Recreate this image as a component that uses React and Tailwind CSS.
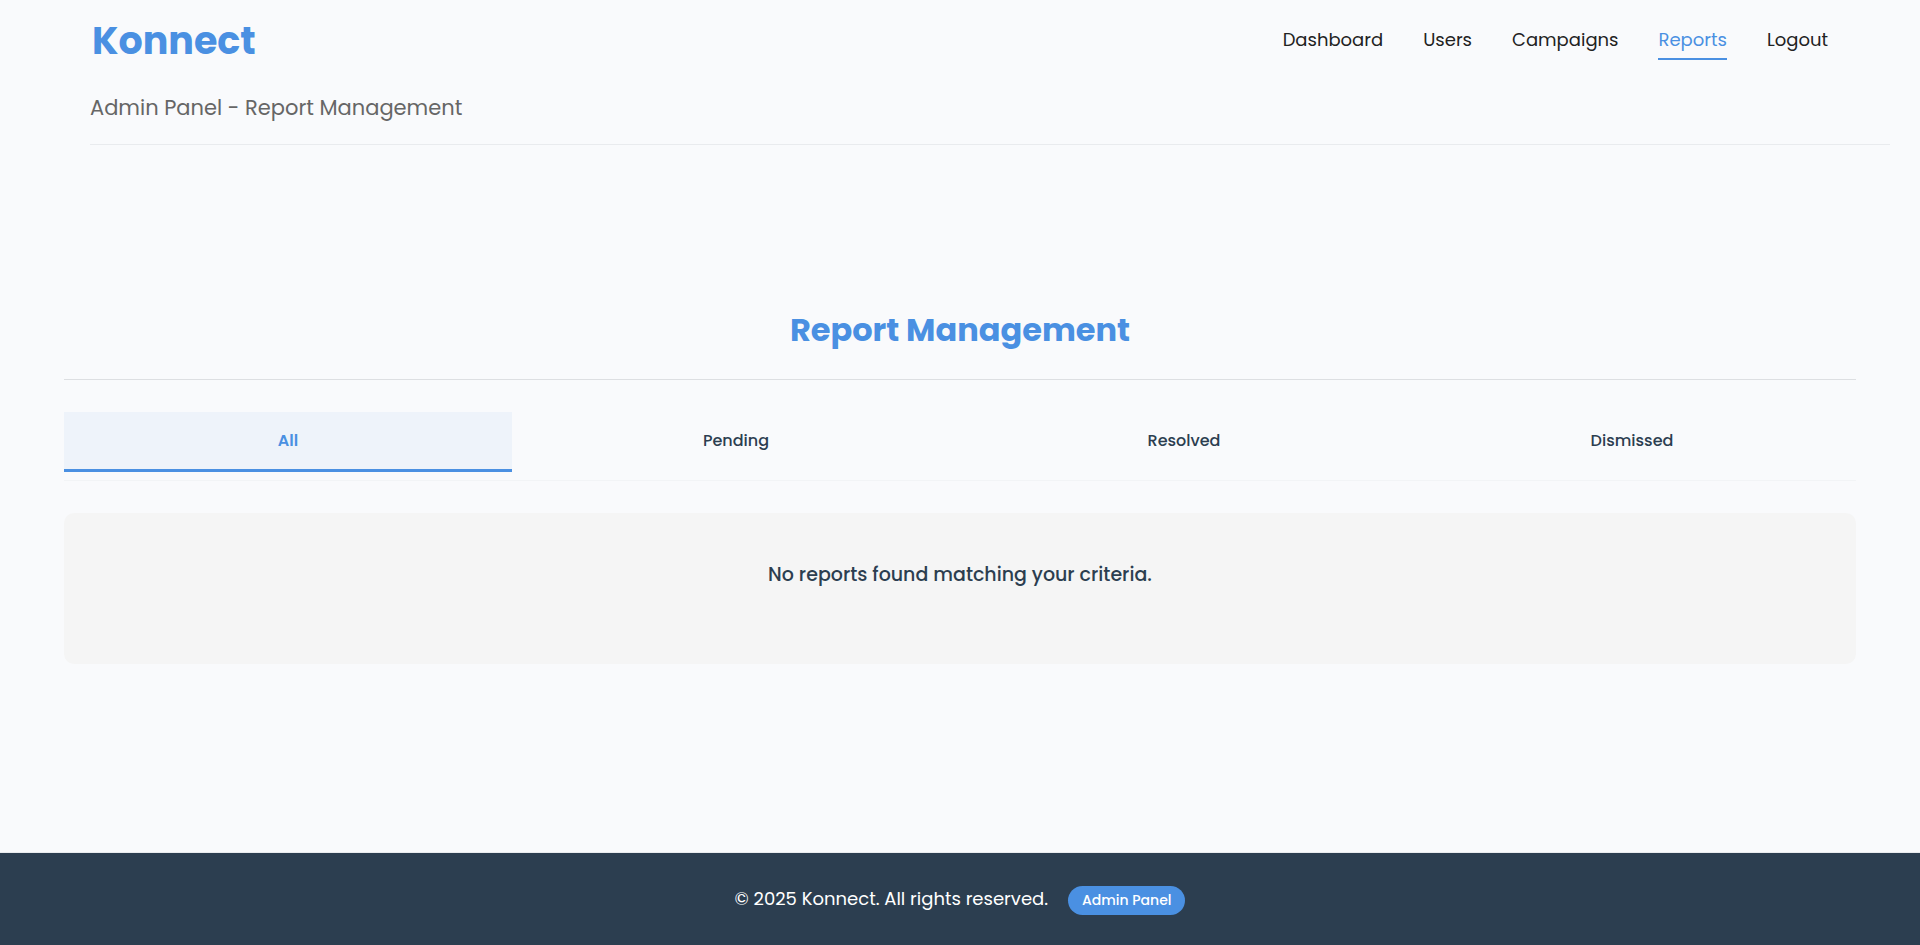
const navLinks = ['Dashboard', 'Users', 'Campaigns', 'Reports', 'Logout'];
const tabs = ['All', 'Pending', 'Resolved', 'Dismissed'];

function Header() {
  return (
    <header>
      <div className="flex h-[82px] items-center justify-between px-[92px]">
        <a href="#home" className="text-[38px] leading-none font-bold text-[#4a90e2]">Konnect</a>
        <nav aria-label="Main" className="flex gap-10 text-[18px] leading-7">
          {navLinks.map((label) => (
            <a
              key={label}
              href={`#${label.toLowerCase()}`}
              aria-current={label === 'Reports' ? 'page' : undefined}
              className={
                label === 'Reports'
                  ? 'border-b-2 border-[#4a90e2] pt-1 pb-1 text-[#4a90e2]'
                  : 'border-b-2 border-transparent pt-1 pb-1 text-[#222222]'
              }
            >
              {label}
            </a>
          ))}
        </nav>
      </div>
      <div className="mr-[30px] ml-[90px] border-b border-[#e9ebee] pt-[10px] pb-5">
        <p className="text-[21px] leading-8 text-[#666666]">Admin Panel - Report Management</p>
      </div>
    </header>
  );
}

function Tabs() {
  return (
    <div role="tablist" className="grid grid-cols-4 border-b border-[#f2f4f6] pb-2">
      {tabs.map((label, i) => (
        <button
          key={label}
          type="button"
          role="tab"
          aria-selected={i === 0}
          className={
            i === 0
              ? 'h-15 border-b-3 border-[#4a90e2] bg-[#eef3fa] text-[16px] font-semibold text-[#4a90e2]'
              : 'h-15 border-b-3 border-transparent text-[16px] font-medium text-[#2c3e50]'
          }
        >
          {label}
        </button>
      ))}
    </div>
  );
}

export default function App() {
  return (
    <div className="flex min-h-screen flex-col bg-[#f9fafc] font-[Poppins,Inter,sans-serif]">
      <Header />
      <main className="flex grow flex-col px-16 pt-40">
        <h1 className="border-b border-[#dddfe2] pb-6 text-center text-[32px] leading-[50px] font-bold text-[#4a90e2]">
          Report Management
        </h1>
        <div className="mt-8">
          <Tabs />
        </div>
        <section className="mt-8 rounded-[10px] bg-[#f5f5f5] px-8 pt-12 pb-[75px] text-center">
          <p className="text-[19px] leading-7 font-medium text-[#2c3e50]">No reports found matching your criteria.</p>
        </section>
      </main>
      <footer className="border-t border-[#e9ebee] bg-[#2c3e50] pt-8 pb-[30px] text-white">
        <div className="flex items-baseline justify-center gap-5">
          <p className="text-[18px] leading-7">© 2025 Konnect. All rights reserved.</p>
          <span className="rounded-full bg-[#4a90e2] px-[14px] py-1 text-[14px] leading-[21px] font-medium">Admin Panel</span>
        </div>
      </footer>
    </div>
  );
}
